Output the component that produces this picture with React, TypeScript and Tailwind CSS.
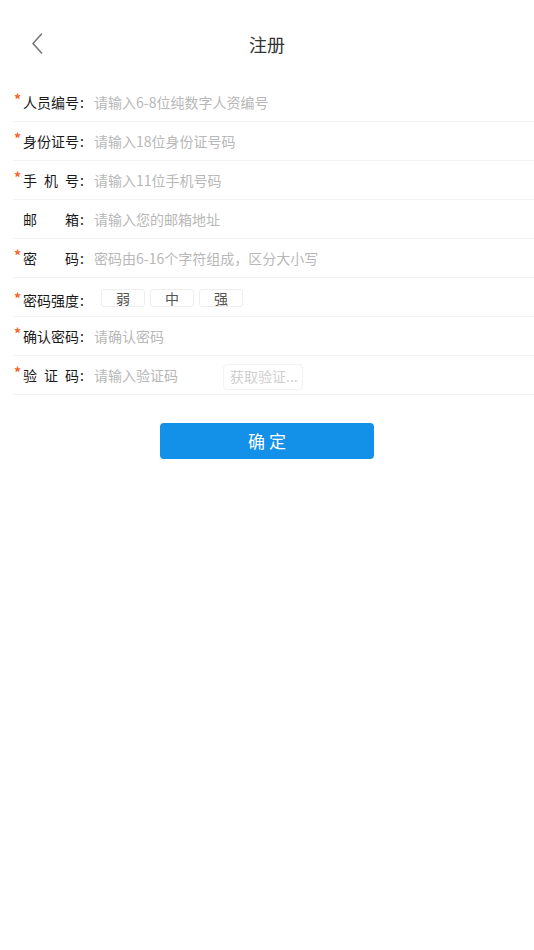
import React from "react";

const font = { fontFamily: '"Noto Sans CJK SC", "Noto Sans", sans-serif' };

type Row = {
  chars: string[];
  required: boolean;
  placeholder?: string;
  kind?: "strength" | "code";
};

const rows: Row[] = [
  { chars: ["人", "员", "编", "号"], required: true, placeholder: "请输入6-8位纯数字人资编号" },
  { chars: ["身", "份", "证", "号"], required: true, placeholder: "请输入18位身份证号码" },
  { chars: ["手", "机", "号"], required: true, placeholder: "请输入11位手机号码" },
  { chars: ["邮", "箱"], required: false, placeholder: "请输入您的邮箱地址" },
  { chars: ["密", "码"], required: true, placeholder: "密码由6-16个字符组成，区分大小写" },
  { chars: ["密", "码", "强", "度"], required: true, kind: "strength" },
  { chars: ["确", "认", "密", "码"], required: true, placeholder: "请确认密码" },
  { chars: ["验", "证", "码"], required: true, placeholder: "请输入验证码", kind: "code" },
];

function Label({ chars, required, lower }: { chars: string[]; required: boolean; lower?: boolean }) {
  return (
    <div className={`flex items-center w-[81px] shrink-0 ${lower ? "pt-[7px]" : ""}`}>
      <span className="w-[10px] text-[14px] leading-none font-bold text-[#f5622a] -translate-y-[3px] pl-[1px]">
        {required ? "*" : ""}
      </span>
      <span className="flex justify-between w-[56px] text-[14px] text-[#1a1a1a]">
        {chars.map((c, i) => (
          <span key={i}>{c}</span>
        ))}
      </span>
      <span className="text-[14px] text-[#1a1a1a] pl-[1px]">:</span>
    </div>
  );
}

export default function App() {
  return (
    <div className="w-[534px] min-h-[950px] bg-white" style={font}>
      {/* header */}
      <div className="relative h-[83px] flex items-start justify-center pt-[32px]">
        <button className="absolute left-[28px] top-[32px] w-[18px] h-[22px] flex items-center justify-center">
          <svg width="12" height="21" viewBox="0 0 12 21" fill="none">
            <path d="M10.5 1 L2 10.5 L10.5 20" stroke="#777" strokeWidth="1.6" strokeLinecap="round" strokeLinejoin="round" />
          </svg>
        </button>
        <h1 className="text-[18px] leading-[24px] text-[#333]">注册</h1>
      </div>

      {/* form */}
      <div className="ml-[13px]">
        {rows.map((r, i) => (
          <div key={i} className="h-[39px] flex items-center border-b border-[#f3f3f3]">
            <Label chars={r.chars} required={r.required} lower={r.kind === "strength"} />
            {r.kind === "strength" ? (
              <div className="flex gap-[5px] ml-[7px] pt-[2px]">
                {["弱", "中", "强"].map((s) => (
                  <div
                    key={s}
                    className="w-[44px] h-[18px] flex items-center justify-center rounded-[3px] border border-[#eeeeee] text-[14px] text-[#555]"
                  >
                    {s}
                  </div>
                ))}
              </div>
            ) : (
              <input
                className="ml-[0px] w-[128px] grow text-[14px] text-[#333] outline-none bg-transparent placeholder:text-[#b8b8b8]"
                style={r.kind === "code" ? { ...font, flexGrow: 0 } : font}
                placeholder={r.placeholder}
              />
            )}
            {r.kind === "code" && (
              <button className="ml-[1px] mt-[3px] w-[80px] h-[26px] rounded-[4px] border border-[#f3f3f3] text-[14px] text-[#cfcfcf] text-left pl-[6px]">
                获取验证...
              </button>
            )}
          </div>
        ))}
      </div>

      {/* submit */}
      <div className="flex justify-center mt-[28px]">
        <button className="w-[214px] h-[36px] rounded-[4px] bg-[#1390e8] text-white text-[17px] tracking-[4px] pl-[4px]">
          确定
        </button>
      </div>
    </div>
  );
}
